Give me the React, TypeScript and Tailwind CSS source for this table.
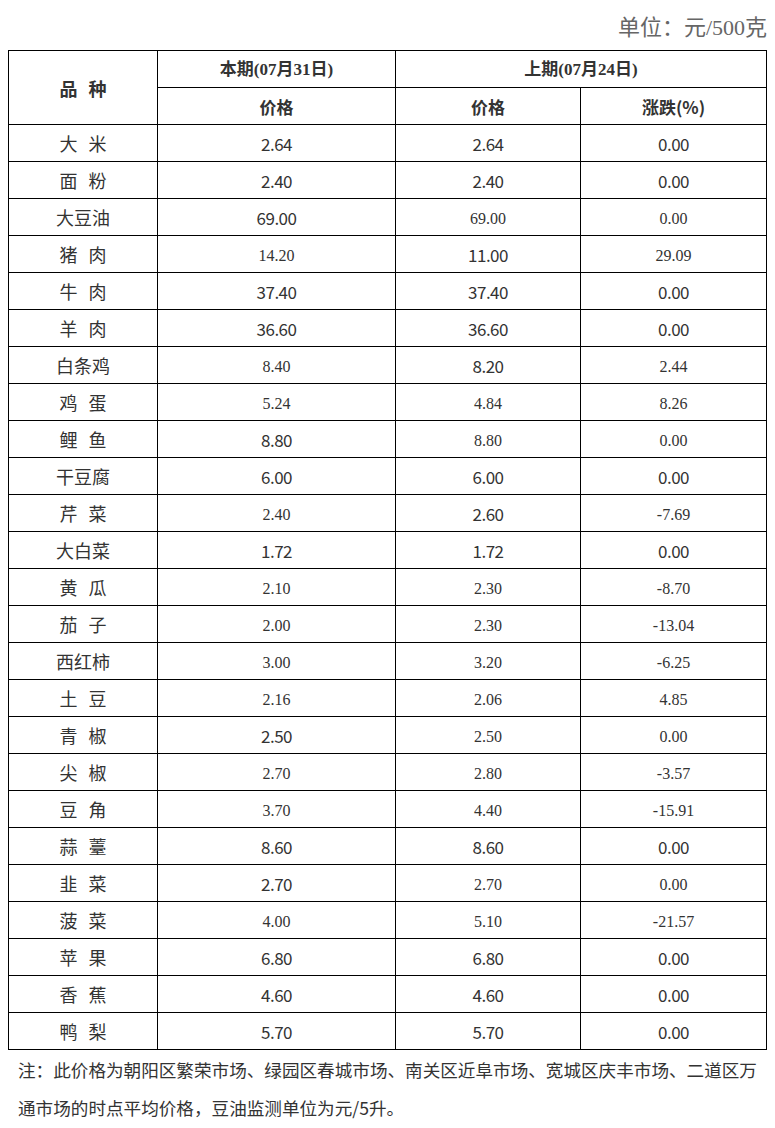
const SANS = "font-['Noto_Sans_CJK_SC','Noto_Sans',sans-serif]";
const SERIF = "font-['Liberation_Serif','Noto_Sans_CJK_SC',serif]";

type Cell = [string, boolean]; // value, serif?

const rows: { name: string; cells: Cell[] }[] = [
  { name: "大 米", cells: [["2.64", false], ["2.64", false], ["0.00", false]] },
  { name: "面 粉", cells: [["2.40", false], ["2.40", false], ["0.00", false]] },
  { name: "大豆油", cells: [["69.00", false], ["69.00", true], ["0.00", true]] },
  { name: "猪 肉", cells: [["14.20", true], ["11.00", false], ["29.09", true]] },
  { name: "牛 肉", cells: [["37.40", false], ["37.40", false], ["0.00", false]] },
  { name: "羊 肉", cells: [["36.60", false], ["36.60", false], ["0.00", false]] },
  { name: "白条鸡", cells: [["8.40", true], ["8.20", false], ["2.44", true]] },
  { name: "鸡 蛋", cells: [["5.24", true], ["4.84", true], ["8.26", true]] },
  { name: "鲤 鱼", cells: [["8.80", false], ["8.80", true], ["0.00", true]] },
  { name: "干豆腐", cells: [["6.00", false], ["6.00", false], ["0.00", false]] },
  { name: "芹 菜", cells: [["2.40", true], ["2.60", false], ["-7.69", true]] },
  { name: "大白菜", cells: [["1.72", false], ["1.72", false], ["0.00", false]] },
  { name: "黄 瓜", cells: [["2.10", true], ["2.30", true], ["-8.70", true]] },
  { name: "茄 子", cells: [["2.00", true], ["2.30", true], ["-13.04", true]] },
  { name: "西红柿", cells: [["3.00", true], ["3.20", true], ["-6.25", true]] },
  { name: "土 豆", cells: [["2.16", true], ["2.06", true], ["4.85", true]] },
  { name: "青 椒", cells: [["2.50", false], ["2.50", true], ["0.00", true]] },
  { name: "尖 椒", cells: [["2.70", true], ["2.80", true], ["-3.57", true]] },
  { name: "豆 角", cells: [["3.70", true], ["4.40", true], ["-15.91", true]] },
  { name: "蒜 薹", cells: [["8.60", false], ["8.60", false], ["0.00", false]] },
  { name: "韭 菜", cells: [["2.70", false], ["2.70", true], ["0.00", true]] },
  { name: "菠 菜", cells: [["4.00", true], ["5.10", true], ["-21.57", true]] },
  { name: "苹 果", cells: [["6.80", false], ["6.80", false], ["0.00", false]] },
  { name: "香 蕉", cells: [["4.60", false], ["4.60", false], ["0.00", false]] },
  { name: "鸭 梨", cells: [["5.70", false], ["5.70", false], ["0.00", false]] },
];

const td = "border border-black text-center align-middle p-0 pt-px h-[37px]";

function Value({ v, serif }: { v: string; serif: boolean }) {
  return serif ? (
    <span className="font-['Liberation_Serif',serif] text-[16px]">{v}</span>
  ) : (
    <span className={`${SANS} text-[17px] tracking-[-0.5px]`}>{v}</span>
  );
}

export default function App() {
  return (
    <div className={`w-[775px] px-2 text-[#333] bg-white ${SANS}`}>
      <div className={`h-[50px] pt-1 flex items-center justify-end ${SERIF} text-[22px] text-[#666]`}>
        单位：元/500克
      </div>
      <table className="w-[758px] table-fixed border-collapse border border-black">
        <colgroup>
          <col className="w-[149px]" />
          <col className="w-[238px]" />
          <col className="w-[185px]" />
          <col className="w-[186px]" />
        </colgroup>
        <thead>
          <tr>
            <td rowSpan={2} className={`${td} text-[18px] font-bold [word-spacing:7px]`}>
              品 种
            </td>
            <td className={`${td} font-bold text-[17px] ${SERIF}`}>本期(07月31日)</td>
            <td colSpan={2} className={`${td} font-bold text-[17px] ${SERIF}`}>
              上期(07月24日)
            </td>
          </tr>
          <tr>
            <td className={`${td} font-bold text-[17px]`}>价格</td>
            <td className={`${td} font-bold text-[17px]`}>价格</td>
            <td className={`${td} font-bold text-[17px]`}>涨跌(%)</td>
          </tr>
        </thead>
        <tbody>
          {rows.map((r) => (
            <tr key={r.name}>
              <td className={`${td} text-[18px] [word-spacing:7px]`}>{r.name}</td>
              {r.cells.map(([v, serif], i) => (
                <td key={i} className={td}>
                  <Value v={v} serif={serif} />
                </td>
              ))}
            </tr>
          ))}
        </tbody>
      </table>
      <p className="pl-[10px] pt-[1px] text-[17.6px] leading-[38px] text-[#333]">
        注：此价格为朝阳区繁荣市场、绿园区春城市场、南关区近阜市场、宽城区庆丰市场、二道区万通市场的时点平均价格，豆油监测单位为元/5升。
      </p>
    </div>
  );
}
